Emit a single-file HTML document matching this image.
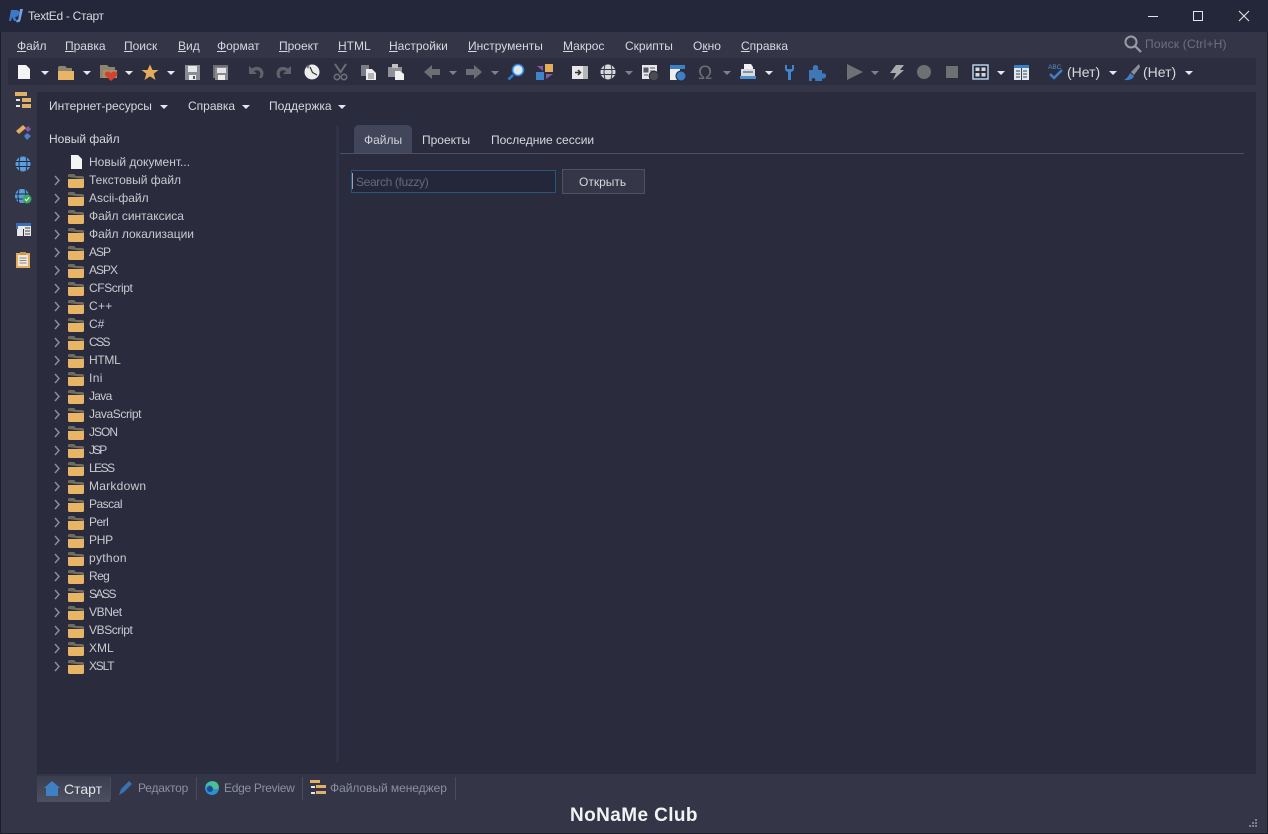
<!DOCTYPE html>
<html lang="ru"><head><meta charset="utf-8"><title>TextEd - Старт</title>
<style>
html,body{margin:0;padding:0;background:#343648}
#p{position:relative;width:1268px;height:834px;overflow:hidden;background:#343648;font:12px "Liberation Sans","Noto Sans CJK SC",sans-serif;color:#d4d6dc}
#p div,#p span.a{position:absolute;white-space:nowrap}
.m{top:39px;line-height:14px;color:#d6d8de;font-size:12px}
.r{left:89px;line-height:14px;color:#c8cad2;font-size:12px}
svg{position:absolute;left:0;top:0}
</style></head><body><div id="p">
<div style="left:0;top:0;width:1268px;height:32px;background:#24263a"></div>
<div style="left:8px;top:58px;width:1248px;height:27px;background:#2c2e40"></div>
<div style="left:37px;top:92px;width:1219px;height:682px;background:#2a2c3d"></div>
<div style="left:336px;top:126px;width:3px;height:636px;background:#303245"></div>
<div style="left:354px;top:125px;width:58px;height:28px;background:#41465a;border-radius:5px 5px 0 0"></div>
<div style="left:340px;top:153px;width:904px;height:1px;background:#4c5064"></div>
<div style="left:351px;top:170px;width:203px;height:21px;background:#24263a;border:1px solid #2c5378"></div>
<div style="left:562px;top:169px;width:81px;height:23px;background:#353749;border:1px solid #50525f"></div>
<div style="left:37px;top:776px;width:73px;height:26px;background:linear-gradient(#3a3d4e,#4d5060)"></div>
<div style="left:110px;top:777px;width:1px;height:23px;background:#4a4c5c"></div>
<div style="left:196px;top:777px;width:1px;height:23px;background:#4a4c5c"></div>
<div style="left:302px;top:777px;width:1px;height:23px;background:#4a4c5c"></div>
<div style="left:455px;top:777px;width:1px;height:23px;background:#4a4c5c"></div>
<div style="left:0;top:833px;width:1268px;height:1px;background:#1e1f2c"></div>
<div style="left:0;top:32px;width:1px;height:802px;background:#1e1f2c"></div>
<div style="left:1267px;top:32px;width:1px;height:802px;background:#1e1f2c"></div>

<div style="left:28px;top:9px;line-height:15px;color:#d8dae0;font-size:12px;letter-spacing:-.3px">TextEd - Старт</div>
<div class="m" style="left:17px"><u>Ф</u>айл</div>
<div class="m" style="left:65px"><u>П</u>равка</div>
<div class="m" style="left:124px"><u>П</u>оиск</div>
<div class="m" style="left:178px"><u>В</u>ид</div>
<div class="m" style="left:217px"><u>Ф</u>ормат</div>
<div class="m" style="left:279px"><u>П</u>роект</div>
<div class="m" style="left:338px"><u>H</u>TML</div>
<div class="m" style="left:389px"><u>Н</u>астройки</div>
<div class="m" style="left:468px"><u>И</u>нструменты</div>
<div class="m" style="left:563px"><u>М</u>акрос</div>
<div class="m" style="left:625px">Скрипты</div>
<div class="m" style="left:693px">О<u>к</u>но</div>
<div class="m" style="left:741px"><u>С</u>правка</div>
<div style="left:1145px;top:37px;line-height:14px;color:#6d7080;font-size:12px;letter-spacing:.2px">Поиск (Ctrl+H)</div>
<div style="left:1067px;top:64px;line-height:17px;color:#d6d8de;font-size:14px">(Нет)</div>
<div style="left:1143px;top:64px;line-height:17px;color:#d6d8de;font-size:14px">(Нет)</div>

<div class="m" style="left:49px;top:99px">Интернет-ресурсы</div>
<div class="m" style="left:188px;top:99px">Справка</div>
<div class="m" style="left:269px;top:99px">Поддержка</div>
<div class="m" style="left:49px;top:132px">Новый файл</div>
<div class="m" style="left:364px;top:133px;color:#d0d2da">Файлы</div>
<div class="m" style="left:422px;top:133px">Проекты</div>
<div class="m" style="left:491px;top:133px">Последние сессии</div>
<div style="left:356px;top:175px;line-height:14px;color:#666978;font-size:12px;letter-spacing:-.35px">Search (fuzzy)</div>
<div style="left:352px;top:173px;width:1px;height:16px;background:#a0a4b0"></div>
<div class="m" style="left:579px;top:175px;color:#d6d8de">Открыть</div>

<div class="r" style="top:155px">Новый документ...</div>
<div class="r" style="top:173px">Текстовый файл</div>
<div class="r" style="top:191px">Ascii-файл</div>
<div class="r" style="top:209px">Файл синтаксиса</div>
<div class="r" style="top:227px">Файл локализации</div>
<div class="r" style="top:245px;letter-spacing:-1px">ASP</div>
<div class="r" style="top:263px;letter-spacing:-1px">ASPX</div>
<div class="r" style="top:281px;letter-spacing:-.4px">CFScript</div>
<div class="r" style="top:299px;letter-spacing:.3px">C++</div>
<div class="r" style="top:317px">C#</div>
<div class="r" style="top:335px;letter-spacing:-1.6px">CSS</div>
<div class="r" style="top:353px;letter-spacing:-.3px">HTML</div>
<div class="r" style="top:371px;letter-spacing:.4px">Ini</div>
<div class="r" style="top:389px;letter-spacing:-.7px">Java</div>
<div class="r" style="top:407px;letter-spacing:-.4px">JavaScript</div>
<div class="r" style="top:425px;letter-spacing:-1px">JSON</div>
<div class="r" style="top:443px;letter-spacing:-1.9px">JSP</div>
<div class="r" style="top:461px;letter-spacing:-1.5px">LESS</div>
<div class="r" style="top:479px;letter-spacing:.25px">Markdown</div>
<div class="r" style="top:497px;letter-spacing:-.5px">Pascal</div>
<div class="r" style="top:515px;letter-spacing:-.5px">Perl</div>
<div class="r" style="top:533px;letter-spacing:-.3px">PHP</div>
<div class="r" style="top:551px;letter-spacing:.3px">python</div>
<div class="r" style="top:569px;letter-spacing:-.6px">Reg</div>
<div class="r" style="top:587px;letter-spacing:-1.5px">SASS</div>
<div class="r" style="top:605px;letter-spacing:-.4px">VBNet</div>
<div class="r" style="top:623px;letter-spacing:-.4px">VBScript</div>
<div class="r" style="top:641px">XML</div>
<div class="r" style="top:659px;letter-spacing:-1.2px">XSLT</div>

<div style="left:64px;top:780px;line-height:18px;font-size:14px;color:#e2e4e8">Старт</div>
<div style="left:138px;top:781px;line-height:14px;color:#8d90a0;letter-spacing:-.2px">Редактор</div>
<div style="left:224px;top:781px;line-height:14px;color:#8d90a0;letter-spacing:-.3px">Edge Preview</div>
<div style="left:330px;top:781px;line-height:14px;color:#8d90a0;letter-spacing:-.05px">Файловый менеджер</div>
<div style="left:570px;top:804px;line-height:24px;font-size:19px;font-weight:bold;color:#f2f3f5;letter-spacing:.4px">NoNaMe Club</div>

<svg width="1268" height="834" viewBox="0 0 1268 834" xmlns="http://www.w3.org/2000/svg">
<defs>
<path id="ar" d="M-4-2H4L0 2Z" fill="#e6e7ea"/>
<path id="ag" d="M-4-2H4L0 2Z" fill="#80828a"/>
<g id="f"><path d="M0 3V1.500Q0 0 1.500 0H6L8 2H14Q16 2 16 4V5Z" fill="#6f6c60"/><path d="M0 5H16V12.500Q16 14 14.500 14H1.500Q0 14 0 12.500Z" fill="#e8b566"/></g>
<path id="ch" d="M0 0L4 4.500L0 9" fill="none" stroke="#8b8d98" stroke-width="1.500"/>
</defs>
<!-- logo -->
<path d="M11 10H16Q20 10 19 14Q18 17 15 17L17 21H14L12 17L11 21H9Z" fill="#3f78c4"/><path d="M20 9H23L20.500 20Q20 23 16 22L17 20Q18 20 18.300 19Z" fill="#6ea2e0"/>
<!-- window buttons -->
<path d="M1148 16.500H1158" stroke="#e4e5e8"/><rect x="1193.500" y="11.500" width="9" height="9" fill="none" stroke="#e4e5e8"/><path d="M1239 11L1249 21M1249 11L1239 21" stroke="#e4e5e8" stroke-width="1.100"/>
<!-- search -->
<circle cx="1131" cy="42" r="5.500" fill="none" stroke="#9a9ca6" stroke-width="2"/><path d="M1135 46L1141 52" stroke="#9a9ca6" stroke-width="2.200"/>
<!-- toolbar left -->
<path d="M18 65H26L30 69V79H18Z" fill="#f4f4f4"/>
<use href="#ar" x="45" y="73"/>
<path d="M58 68Q58 66 60 66H65L67 68H72V71H58Z" fill="#8b8672"/><path d="M58 71H74V80H58Z" fill="#e8b566"/>
<use href="#ar" x="87" y="73"/>
<path d="M100 65H107L109 67H115V70H103V78H100Z" fill="#8b8672"/><path d="M103 70H117V78H103Z" fill="#a88f66"/><path d="M111 81L105 75.500Q104 71.500 108 71.500Q110 71.500 111 73.500Q112 71.500 114 71.500Q118 71.500 117 75.500Z" fill="#d4402e"/>
<use href="#ar" x="129" y="73"/>
<path d="M150 64.500L152.500 70H158.500L153.700 73.800L155.500 80L150 76.400L144.500 80L146.300 73.800L141.500 70H147.500Z" fill="#e3ad5b"/>
<use href="#ar" x="171" y="73"/>
<g id="sv"><path d="M185 65H200V80H185Z" fill="#8b8d94"/><path d="M188 66H197V72H188Z" fill="#e8e8ea"/><path d="M189 75H196V80H189Z" fill="#f0f0f0"/><path d="M193 76H195V79H193Z" fill="#55575f"/></g>
<path d="M213 65H228V68H226V67H215V78H213Z" fill="#6d6f76"/><path d="M215 67H228V80H215Z" fill="#888a90"/><path d="M217 68H226V73H217Z" fill="#e4e4e6"/><path d="M218 75H225V80H218Z" fill="#eee"/>
<path d="M249 66V74H257L254 71Q258 69 260 72Q261 75 259 78H262Q265 73 262 69Q258 65 252 68.500Z" fill="#60636b"/>
<path d="M291 66V74H283L286 71Q282 69 280 72Q279 75 281 78H278Q275 73 278 69Q282 65 288 68.500Z" fill="#60636b"/>
<circle cx="312" cy="72" r="7.500" fill="#ececec"/><path d="M306 66L310 65L308 69Z" fill="#777"/><path d="M310 67L312.500 72.500L317 75" fill="none" stroke="#333" stroke-width="1.200"/>
<path d="M335 64L341 73M346 64L340 73" stroke="#6b6e74" stroke-width="2"/><circle cx="337" cy="77" r="2.700" fill="none" stroke="#6b6e74" stroke-width="1.600"/><circle cx="344" cy="77" r="2.700" fill="none" stroke="#6b6e74" stroke-width="1.600"/>
<path d="M361 65H369V76H361Z" fill="#7b7d84"/><path d="M366 69H372L376 73V80H366Z" fill="#eeeeee"/><path d="M368 74H374M368 76H374M368 78H374" stroke="#555" stroke-width=".8"/>
<path d="M388 67H402V77H388Z" fill="#8f9197"/><path d="M392 64H398V68H392Z" fill="#c0c0c4"/><path d="M395 71H400L404 74V80H395Z" fill="#f0f0f0"/>
<!-- nav -->
<path d="M424 72L432 65V69H440V75H432V79Z" fill="#6b6e72"/><use href="#ag" x="453" y="73"/>
<path d="M482 72L474 65V69H466V75H474V79Z" fill="#6b6e72"/><use href="#ag" x="495" y="73"/>
<circle cx="518" cy="70" r="5.500" fill="#d8e8f8" stroke="#2f7fd0" stroke-width="1.600"/><path d="M513 75L508.500 79.500" stroke="#2f7fd0" stroke-width="2.600"/>
<path d="M545 64H553V72H545Z" fill="#e3ad5b"/><path d="M536 72H544V80H536Z" fill="#3f84c8"/><path d="M537 66L543 66L543 71Z" fill="#8757b0"/><path d="M553 74L546 79V74Z" fill="#8757b0"/>
<path d="M572 66H588V79H572Z" fill="#e8e8e8"/><path d="M583 66H588V79H583Z" fill="#b6b6b8"/><path d="M575 72.500H580M578 70L580.500 72.500L578 75" fill="none" stroke="#333" stroke-width="1.500"/>
<circle cx="608" cy="72" r="7.500" fill="#d8d8da"/><path d="M600.500 69.500H615.500M600.500 74.500H615.500M605 65Q603 72 605 79M611 65Q613 72 611 79" fill="none" stroke="#35374a"/>
<use href="#ag" x="629" y="73"/>
<path d="M642 65H657V79H642Z" fill="#e6e6e8"/><path d="M644 68H648V72H644ZM650 68H655M650 71H655M644 75H648" fill="#556" stroke="#556"/><circle cx="654" cy="76" r="4.800" fill="#4a4c54" stroke="#2a2c3e"/>
<path d="M670 65H685V69H670Z" fill="#3a80c4"/><path d="M670 69H680V80H670Z" fill="#eeeeee"/><circle cx="681" cy="76" r="5" fill="#3a80c4" stroke="#2a2c3e"/>
<text x="698" y="79" font-family="Liberation Sans" font-size="19" fill="#6b6e74">Ω</text>
<use href="#ag" x="727" y="73"/>
<path d="M744 64H751L753 67V69H744Z" fill="#f0f0f0"/><path d="M741 69H755V76H741Z" fill="#d6dce4"/><path d="M740 76H756V79H740Z" fill="#4f8fd0"/><path d="M743 72H753" stroke="#444"/>
<use href="#ar" x="769" y="73"/>
<path d="M785 65V69Q785 71 788 72V80H791V72Q794 71 794 69V65H792V69H787V65Z" fill="#4086cc"/>
<path d="M809 70H813Q812 65 815.500 65Q819 65 818 70H822V73.500Q826 72.500 826 76Q826 79 822 78.500V81H815Q816 78 813.500 78Q811 78 812 81H809Z" fill="#3f78b8"/>
<path d="M847 64L863 72L847 80Z" fill="#6e7173"/><use href="#ag" x="875" y="73"/>
<path d="M896 65H904L900 70H904L893 80L896 73H890Z" fill="#a8aaae"/>
<circle cx="924" cy="72" r="7" fill="#6e7072"/><rect x="946" y="66" width="12" height="12" fill="#6e7072"/>
<rect x="973" y="65" width="15" height="14" fill="#2c2e40" stroke="#b4d0e8" stroke-width="1.500"/><path d="M975.500 67.500H979.500V71H975.500ZM981.500 67.500H985.500V71H981.500ZM975.500 73H979.500V76.500H975.500ZM981.500 73H985.500V76.500H981.500Z" fill="#d4d6da"/>
<use href="#ar" x="1001" y="73"/>
<path d="M1014 65H1029V68H1014Z" fill="#3a80c4"/><path d="M1014 68H1029V80H1014Z" fill="#e0e8f0"/><path d="M1021.500 68V80M1016 71H1020M1016 74H1020M1016 77H1020M1023 71H1027M1023 74H1027M1023 77H1027" stroke="#3a4050"/>
<text x="1048" y="69" font-family="Liberation Sans" font-size="6.500" fill="#4f90d0">ABC</text>
<path d="M1050 74L1054 78L1062 70" fill="none" stroke="#3d80c8" stroke-width="2.400"/>
<use href="#ar" x="1113" y="73"/>
<path d="M1139 64L1131 72L1134 75L1140 67Z" fill="#8d8f95"/><path d="M1130 73L1134 76Q1132 81 1124 80Q1128 78 1130 73Z" fill="#3d80c8"/>
<use href="#ar" x="1189" y="73"/>
<use href="#ar" x="164" y="107"/><use href="#ar" x="246" y="107"/><use href="#ar" x="342" y="107"/>
<!-- sidebar -->
<path d="M15 92H27V96H15ZM22 98H31V102H22ZM22 104H31V108H22Z" fill="#e0b066"/><path d="M16 99H20V101H16ZM16 105H20V107H16Z" fill="#e8e8e8"/>
<path d="M16 131L23 125L26 128L19 134Z" fill="#e3ad5b"/><path d="M25 129L28 126L31 129L28 132Z" fill="#8757b0"/><path d="M24 136L27 133L31 136L27 140Z" fill="#4f80c4"/>
<circle cx="23" cy="164" r="7.500" fill="#5a9edc"/><path d="M15.500 161.500H30.500M15.500 166.500H30.500M20 157Q18 164 20 171M26 157Q28 164 26 171" fill="none" stroke="#24263a" stroke-width=".9"/>
<circle cx="22" cy="196" r="7" fill="#5a9edc"/><path d="M15 194H29M15 199H29M19 190Q17 196 19 203M25 190Q27 196 25 203" fill="none" stroke="#24263a" stroke-width=".9"/><circle cx="27" cy="199" r="4.500" fill="#3aa860"/><path d="M25 199L26.500 200.700L29.200 197.500" fill="none" stroke="#fff"/>
<path d="M16 223H31V236H16Z" fill="#3a70b0"/><path d="M18 226H31V236H18Z" fill="#e8e8ea"/><path d="M16 229H24V236H16Z" fill="#30323f"/><path d="M17 229H23V236H17Z" fill="#e8e8ea"/><path d="M25 228H30M25 231H30M25 234H30" stroke="#444"/>
<path d="M16 253H30V268H16Z" fill="#e3ad5b"/><path d="M20 252H26V255H20Z" fill="#c89848"/><path d="M18 255H28V266H18Z" fill="#f0eadc"/><path d="M19.500 258H26.500M19.500 260.500H26.500M19.500 263H26.500" stroke="#888"/>
<!-- new doc tree -->
<path d="M71 155H78L82 159V169H71Z" fill="#f4f4f4"/>
<!-- bottom tabs icons -->
<path d="M44 788L52 781L60 788H58V796H46V788Z" fill="#3f7fc4"/>
<path d="M119 795L121 789L129 781L132 784L124 792Z" fill="#3a70b4"/>
<circle cx="212" cy="788" r="7" fill="#2f90d0"/><path d="M206 785Q210 780 216 782Q220 785 218 789H211Q213 785 209 785Q207 786 206 787Z" fill="#4ec08e"/><circle cx="210" cy="789" r="3" fill="#134f96"/>
<path d="M310 780H320V783H310ZM316 785H326V788H316ZM316 791H326V794H316Z" fill="#e0b066"/><path d="M311 786H315V788H311ZM311 792H315V794H311Z" fill="#e8e8e8"/>
<!-- grip -->
<path d="M1255 819h2v2h-2zM1252 822h2v2h-2zM1255 822h2v2h-2zM1249 825h2v2h-2zM1252 825h2v2h-2zM1255 825h2v2h-2z" fill="#7e8090"/>
<!-- tree -->
<use href="#f" x="68" y="174"/><use href="#ch" x="55" y="176"/>
<use href="#f" x="68" y="192"/><use href="#ch" x="55" y="194"/>
<use href="#f" x="68" y="210"/><use href="#ch" x="55" y="212"/>
<use href="#f" x="68" y="228"/><use href="#ch" x="55" y="230"/>
<use href="#f" x="68" y="246"/><use href="#ch" x="55" y="248"/>
<use href="#f" x="68" y="264"/><use href="#ch" x="55" y="266"/>
<use href="#f" x="68" y="282"/><use href="#ch" x="55" y="284"/>
<use href="#f" x="68" y="300"/><use href="#ch" x="55" y="302"/>
<use href="#f" x="68" y="318"/><use href="#ch" x="55" y="320"/>
<use href="#f" x="68" y="336"/><use href="#ch" x="55" y="338"/>
<use href="#f" x="68" y="354"/><use href="#ch" x="55" y="356"/>
<use href="#f" x="68" y="372"/><use href="#ch" x="55" y="374"/>
<use href="#f" x="68" y="390"/><use href="#ch" x="55" y="392"/>
<use href="#f" x="68" y="408"/><use href="#ch" x="55" y="410"/>
<use href="#f" x="68" y="426"/><use href="#ch" x="55" y="428"/>
<use href="#f" x="68" y="444"/><use href="#ch" x="55" y="446"/>
<use href="#f" x="68" y="462"/><use href="#ch" x="55" y="464"/>
<use href="#f" x="68" y="480"/><use href="#ch" x="55" y="482"/>
<use href="#f" x="68" y="498"/><use href="#ch" x="55" y="500"/>
<use href="#f" x="68" y="516"/><use href="#ch" x="55" y="518"/>
<use href="#f" x="68" y="534"/><use href="#ch" x="55" y="536"/>
<use href="#f" x="68" y="552"/><use href="#ch" x="55" y="554"/>
<use href="#f" x="68" y="570"/><use href="#ch" x="55" y="572"/>
<use href="#f" x="68" y="588"/><use href="#ch" x="55" y="590"/>
<use href="#f" x="68" y="606"/><use href="#ch" x="55" y="608"/>
<use href="#f" x="68" y="624"/><use href="#ch" x="55" y="626"/>
<use href="#f" x="68" y="642"/><use href="#ch" x="55" y="644"/>
<use href="#f" x="68" y="660"/><use href="#ch" x="55" y="662"/>
</svg>
</div></body></html>
